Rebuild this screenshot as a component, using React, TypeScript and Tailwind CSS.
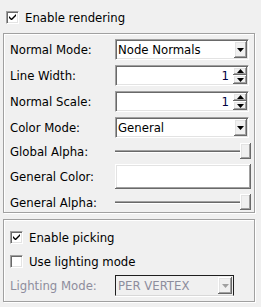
const raised =
	'bg-[#f0f0f0] shadow-[inset_-1px_-1px_0_#696969,inset_1px_1px_0_#ffffff,inset_-2px_-2px_0_#a0a0a0,inset_2px_2px_0_#e3e3e3]';
const sunken =
	'border border-t-[#a0a0a0] border-l-[#a0a0a0] border-b-white border-r-white shadow-[inset_1px_1px_0_#696969,inset_-1px_-1px_0_#e3e3e3]';
const group =
	'border border-[#a0a0a0] shadow-[inset_1px_1px_0_#ffffff,1px_1px_0_#ffffff] ml-[3px] w-[252px]';

const DownArrow = ({ color = '#000' }: { color?: string }) => (
	<svg width="7" height="4" viewBox="0 0 7 4">
		<path d="M0 0h7L3.5 4z" fill={color} />
	</svg>
);

const Check = ({ checked }: { checked: boolean }) => (
	<div className={`w-[13px] h-[13px] bg-white flex items-center justify-center ${sunken}`}>
		{checked && (
			<svg width="7" height="7" viewBox="0 0 7 7">
				<path d="M0 2v2l2 2h1l4-4V0L2.5 4.5z" fill="#000" />
			</svg>
		)}
	</div>
);

const Combo = ({ value }: { value: string }) => (
	<div className={`w-[134px] h-[21px] bg-white flex items-center ${sunken}`}>
		<span className="flex-1 pl-[2px] text-black">{value}</span>
		<div className={`w-[13px] h-[17px] mr-[1px] flex items-center justify-center ${raised}`}>
			<DownArrow />
		</div>
	</div>
);

const Spin = ({ value }: { value: number }) => (
	<div className={`w-[134px] h-[21px] bg-white flex items-center ${sunken}`}>
		<span className="flex-1 text-right pr-[4px] text-[#000040]">{value}</span>
		<div className="flex flex-col mr-[1px]">
			<div className={`w-[14px] h-[8px] flex items-center justify-center ${raised}`}>
				<svg width="7" height="4" viewBox="0 0 7 4">
					<path d="M0 4h7L3.5 0z" fill="#000" />
				</svg>
			</div>
			<div className={`w-[14px] h-[9px] flex items-center justify-center ${raised}`}>
				<DownArrow />
			</div>
		</div>
	</div>
);

const Slider = () => (
	<div className="w-[136px] h-[16px] flex items-center">
		<div className="flex-1 h-[3px] border-t border-t-[#a0a0a0] bg-[#696969] border-b border-b-white" />
		<div className={`w-[11px] h-[16px] ${raised}`} />
	</div>
);

const Row = ({ label, children }: { label: string; children: React.ReactNode }) => (
	<div className="flex items-center">
		<span className="w-[111px] pl-[6px] text-black">{label}</span>
		{children}
	</div>
);

export default function App() {
	return (
		<main
			className="w-[261px] h-[307px] bg-[#f0f0f0] text-[13px] leading-none"
			style={{ fontFamily: '"DejaVu Sans Condensed", "DejaVu Sans", sans-serif' }}
		>
			<div className="flex items-center gap-[6px] pl-[6px] pt-[11px] h-[23px]">
				<Check checked />
				<span>Enable rendering</span>
			</div>

			<div className={`${group} mt-[10px] h-[180px] pt-[5px] flex flex-col gap-[5px]`}>
				<Row label="Normal Mode:">
					<Combo value="Node Normals" />
				</Row>
				<Row label="Line Width:">
					<Spin value={1} />
				</Row>
				<Row label="Normal Scale:">
					<Spin value={1} />
				</Row>
				<Row label="Color Mode:">
					<Combo value="General" />
				</Row>
				<Row label="Global Alpha:">
					<Slider />
				</Row>
				<Row label="General Color:">
					<div className="w-[136px] h-[25px] bg-white shadow-[inset_-1px_-1px_0_#696969,inset_1px_1px_0_#ffffff,inset_-2px_-2px_0_#a0a0a0,inset_2px_2px_0_#e3e3e3]" />
				</Row>
				<Row label="General Alpha:">
					<Slider />
				</Row>
			</div>

			<div className={`${group} mt-[6px] h-[83px] pt-[11px] flex flex-col`}>
				<div className="flex items-center gap-[6px] pl-[6px] h-[12px]">
					<Check checked />
					<span>Enable picking</span>
				</div>
				<div className="flex items-center gap-[6px] pl-[6px] h-[12px] mt-[12px]">
					<Check checked={false} />
					<span>Use lighting mode</span>
				</div>
				<div className="flex items-center mt-[8px]">
					<span className="w-[111px] pl-[6px] text-[#8d8d9d]">Lighting Mode:</span>
					<div className="w-[119px] h-[21px] flex items-center border border-[#1e1e1e] border-b-[#d8d8d8] shadow-[0_1px_0_#ffffff]">
						<span className="flex-1 pl-[2px] text-[#8d8d9d]">PER VERTEX</span>
						<div className={`w-[14px] h-[17px] mr-[1px] flex items-center justify-center ${raised}`}>
							<DownArrow color="#a0a0a0" />
						</div>
					</div>
				</div>
			</div>
		</main>
	);
}
